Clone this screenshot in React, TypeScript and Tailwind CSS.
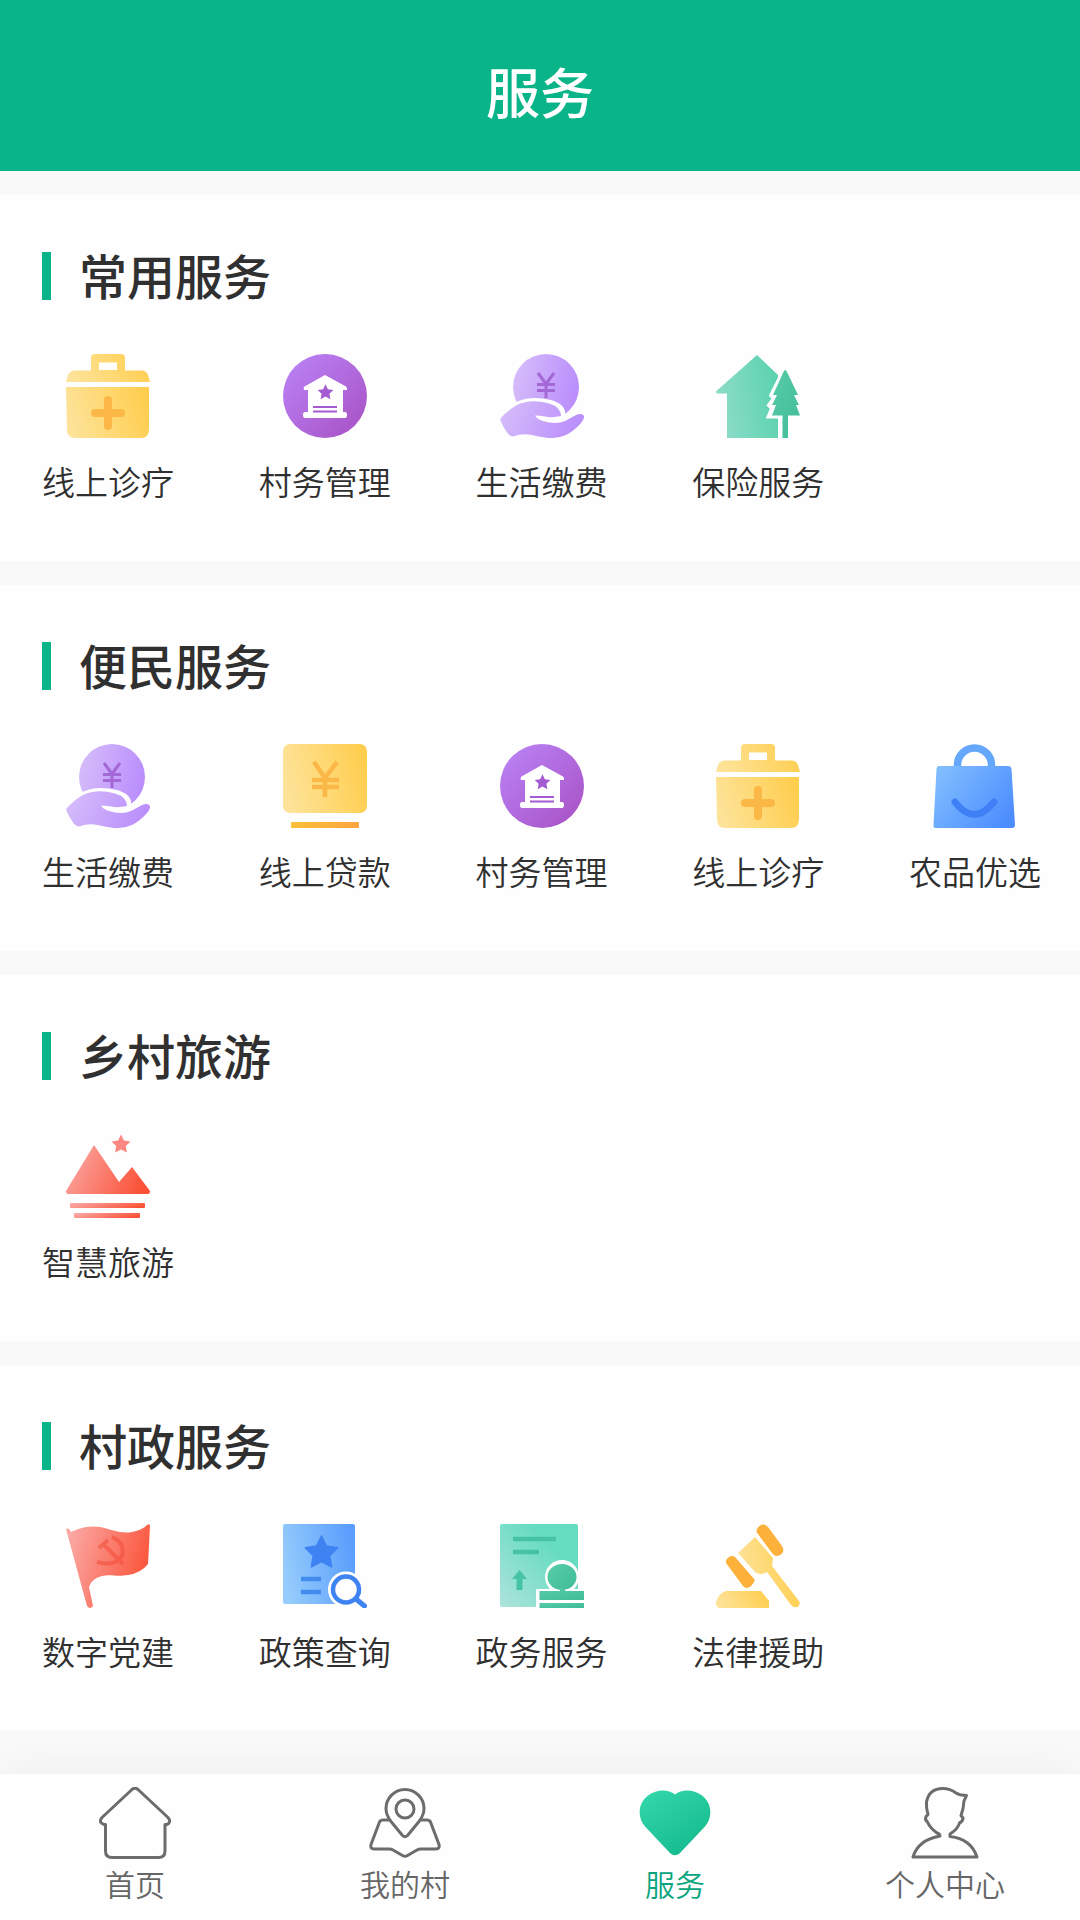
import type { ReactNode } from "react";

const STAR =
  "M0 -10 L2.9 -4 L9.5 -3.1 L4.8 1.5 L5.9 8.1 L0 5 L-5.9 8.1 L-4.8 1.5 L-9.5 -3.1 L-2.9 -4 Z";

function Gradients() {
  return (
    <svg className="absolute size-0" aria-hidden="true">
      <defs>
        <linearGradient id="yellow" x1="0" y1="0.6" x2="1" y2="0.4">
          <stop offset="0" stopColor="#fde39a" />
          <stop offset="1" stopColor="#ffce4f" />
        </linearGradient>
        <linearGradient id="orange" x1="0" y1="0" x2="1" y2="0">
          <stop offset="0" stopColor="#fcbf3a" />
          <stop offset="1" stopColor="#fda53f" />
        </linearGradient>
        <linearGradient id="violet" x1="0.1" y1="0.1" x2="0.9" y2="0.9">
          <stop offset="0" stopColor="#b980f3" />
          <stop offset="1" stopColor="#a955c8" />
        </linearGradient>
        <linearGradient id="lilac" x1="0" y1="0.4" x2="1" y2="0.6">
          <stop offset="0" stopColor="#d5bcfa" />
          <stop offset="1" stopColor="#b98cfc" />
        </linearGradient>
        <linearGradient id="mint" x1="0" y1="0.6" x2="1" y2="0.4">
          <stop offset="0" stopColor="#8edcc8" />
          <stop offset="1" stopColor="#5cd3b0" />
        </linearGradient>
        <linearGradient id="paper" x1="0" y1="1" x2="0.7" y2="0.3">
          <stop offset="0" stopColor="#aee3dc" />
          <stop offset="1" stopColor="#66dcc0" />
        </linearGradient>
        <linearGradient id="green" x1="0" y1="0" x2="1" y2="1">
          <stop offset="0" stopColor="#58cba9" />
          <stop offset="1" stopColor="#3fbd97" />
        </linearGradient>
        <linearGradient id="blue" x1="0" y1="0.2" x2="1" y2="0.8">
          <stop offset="0" stopColor="#80bdff" />
          <stop offset="1" stopColor="#4b8cff" />
        </linearGradient>
        <linearGradient id="sheet" x1="0" y1="0.6" x2="1" y2="0.4">
          <stop offset="0" stopColor="#96cdfc" />
          <stop offset="1" stopColor="#5a9dfc" />
        </linearGradient>
        <linearGradient id="red" x1="0" y1="0.3" x2="1" y2="0.6">
          <stop offset="0" stopColor="#fba7a3" />
          <stop offset="1" stopColor="#fb5136" />
        </linearGradient>
        <linearGradient id="heart" x1="0.1" y1="0" x2="0.8" y2="1">
          <stop offset="0" stopColor="#33d6ab" />
          <stop offset="1" stopColor="#13b98c" />
        </linearGradient>
      </defs>
    </svg>
  );
}

function Art({ children }: { children: ReactNode }) {
  return (
    <svg viewBox="0 0 84 84" className="size-21" fill="none" aria-hidden="true">
      {children}
    </svg>
  );
}

const MedicalKit = () => (
  <Art>
    <path
      fill="url(#yellow)"
      fillRule="evenodd"
      d="M29 0 H55 Q59 0 59 4 V16.500 H76 Q80 16.500 82 21 L84 28 H0 L2 21 Q4 16.500 9 16.500 H25 V4 Q25 0 29 0 Z M33 8.500 V16 H51 V8.500 Z"
    />
    <path fill="url(#yellow)" d="M0 33 H83 V75 Q83 84 75 84 H9 Q1 84 1 75 Z" />
    <path d="M42 46 V72 M29 59 H55" stroke="#fbb847" strokeWidth="8" strokeLinecap="round" />
  </Art>
);

const VillageHall = () => (
  <Art>
    <circle cx="42" cy="42" r="42" fill="url(#violet)" />
    <path
      fill="#fff"
      d="M42 21 L63 32.500 Q64.500 33.500 64 36 H60 V58 H62 Q64 58 64 61 Q64 64 62 64 H22 Q20 64 20 61 Q20 58 22 58 H25 V36 H21 Q20 33.500 21.500 32.500 Z"
    />
    <path d={STAR} transform="translate(42.5 38.500) scale(0.82)" fill="#a45ad0" />
    <path d="M30 53 H54 M30 57.500 H54" stroke="#a45ad0" strokeWidth="2" />
  </Art>
);

const HandCoin = () => (
  <Art>
    <circle cx="46" cy="33" r="33" fill="url(#lilac)" />
    <path
      d="M38 19 L46 30 L54 19 M46 30 V44 M37 30.500 H55 M37 36.500 H55"
      stroke="#a468d6"
      strokeWidth="3"
    />
    <path
      d="M0 66 Q8 55 17 51 Q31 44 50 49 Q64 53 62 62 L64 66 Q70 65 77 60 Q81 58 84 61 L84 86 H0 Z"
      fill="#fefefe"
      stroke="#fefefe"
      strokeWidth="6"
    />
    <path
      d="M0 65 Q8 56 17 51 Q31 44.500 49 49.500 Q61 53 61 62 Q52 64 45 62.500 Q40 61.500 35 61.500 Q37 65 43 67 Q56 71 65 67 L76 61 Q82 58.500 84 62 Q84.500 65 81 69 Q74 77 66 81 Q58 84.500 48 84 Q40 83 32 81 Q22 79 13 82.500 Q9 82 6 77 Q1 69 0 65 Z"
      fill="url(#lilac)"
    />
  </Art>
);

const OnlineLoan = () => (
  <Art>
    <rect width="84" height="69" rx="7" fill="url(#yellow)" />
    <path
      d="M31 18 L42 34 L54 18 M42 34 V53 M29 36 H56 M29 43 H56"
      stroke="#fbb747"
      strokeWidth="4.500"
    />
    <rect x="8" y="78" width="68" height="6" rx="1" fill="url(#orange)" />
  </Art>
);

const HouseTree = () => (
  <Art>
    <path fill="url(#mint)" d="M41 1 L62 21 V84 H11 V39.500 H1 Q-1 38 1 36.500 Z" />
    <path
      fill="#fefefe"
      stroke="#fefefe"
      strokeWidth="7"
      d="M69 17 L57 41 L60 44 L55 51 L58 54 L55 61 H66 V84 H78 V30 Z"
    />
    <path
      fill="url(#green)"
      d="M69 16 Q70 16 71 18 L82 41 H78 L83 51 H80 L84 61.500 H72 V84 H66.500 V61.500 H56 L60 51 H56 L61 41 H57 L67 19 Q68 16 69 16 Z"
    />
  </Art>
);

const ShoppingBag = () => (
  <Art>
    <path d="M24.500 26 V21 A17 17 0 0 1 58.500 21 V26" stroke="#65a8fb" strokeWidth="7.500" />
    <path
      d="M6 22 H75 Q78 22 78.500 25 L82 81 Q82 84 79 84 H3 Q0 84 .5 81 L3.500 25 Q4 22 6 22 Z"
      fill="url(#blue)"
    />
    <path d="M22 58 Q41 83 61 58" stroke="#3f80f6" strokeWidth="7" strokeLinecap="round" />
  </Art>
);

const Mountains = () => (
  <Art>
    <path d={STAR} transform="translate(55 10.500)" fill="#fb8780" />
    <path fill="url(#red)" d="M28 11 L53 48 L66 33 L84 57 Q84 60 82 60 H2 Q0 60 0 57 Z" />
    <rect x="4" y="69" width="75" height="5" rx="1" fill="url(#red)" />
    <rect x="8" y="79" width="66" height="5" rx="1" fill="url(#red)" />
  </Art>
);

const PartyFlag = () => (
  <Art>
    <path
      fill="url(#red)"
      d="M0 5 Q3 3 5 8 Q20 1 34 3 C48 6 56 11 70 7 Q77 5 81 1 Q84 -1 84 2 L82 40 Q75 49 62 51 C50 53 46 50 36 52 Q25 55 23 63 L27 82 Q24 86 21 82 Z"
    />
    <path
      d="M46 13 Q59 18 56 32 Q50 43 31 38 M33 24 L42 16 M37 20 L57 40"
      stroke="#f4503c"
      strokeWidth="4"
      opacity="0.6"
    />
  </Art>
);

const PolicySearch = () => (
  <Art>
    <rect width="72" height="80" rx="2" fill="url(#sheet)" />
    <path
      d={STAR}
      transform="translate(38.500 29) scale(1.7)"
      fill="#3f83f3"
      stroke="#3f83f3"
      strokeLinejoin="round"
    />
    <path d="M18 55 H38 M18 68 H38" stroke="#438cee" strokeWidth="4.500" />
    <circle cx="63" cy="65.500" r="18" fill="#fefefe" />
    <path d="M73 76 L81 82" stroke="#fefefe" strokeWidth="9" />
    <circle cx="63" cy="65.500" r="13" stroke="#3f83f3" strokeWidth="4.500" fill="#fefefe" />
    <path d="M73 75 L81.500 82" stroke="#3f83f3" strokeWidth="5" strokeLinecap="round" />
  </Art>
);

const GovernmentStamp = () => (
  <Art>
    <rect width="78" height="83" rx="2" fill="url(#paper)" />
    <path d="M13 15 H56 M13 28 H39" stroke="#46c3a3" strokeWidth="4.500" />
    <path d="M19.500 46 L27 55 H22.500 V66 H16.500 V55 H12 Z" fill="#46c3a3" />
    <circle cx="62" cy="53" r="17" fill="#fefefe" />
    <path d="M36 65 H84 V84 H36 Z" fill="#fefefe" />
    <ellipse cx="62" cy="53" rx="14.500" ry="13" fill="url(#green)" />
    <path d="M60 64 H65 V67 H84 V76 H39.500 V67 H60 Z" fill="url(#green)" />
    <path d="M39.500 79 H84 V84 H39.500 Z" fill="url(#green)" />
  </Art>
);

const Gavel = () => (
  <Art>
    <path
      d="M39 13 L57 34 L56 42 L83 77 Q85 81 81 83 Q78 84 75 81 L51 48 Q45 52 39 48 L22 29 Z"
      fill="url(#yellow)"
    />
    <path
      d="M40.500 8 Q40 5 44 1.500 Q48 -1 52 3 L66 22 Q68 25 67 28 Q65 32 60 32 Q58 32 56 29 Z"
      fill="#fdb13a"
    />
    <path
      d="M10 39 Q9 36 13 33 Q17 31 19 33 L39 56 Q36 63 31 64 Q29 64 27 62 Z"
      fill="#fdb13a"
    />
    <path d="M10 67 H45 L53 77 V84 H3 Q-1 82 0 78 Q3 69 10 67 Z" fill="url(#yellow)" />
  </Art>
);

function TabArt({ children }: { children: ReactNode }) {
  return (
    <svg
      viewBox="0 0 72 72"
      className="size-18"
      fill="none"
      stroke="#6c6c6c"
      strokeWidth="3"
      strokeLinejoin="round"
      aria-hidden="true"
    >
      {children}
    </svg>
  );
}

const HomeIcon = () => (
  <TabArt>
    <path d="M33 2.500 Q36 0 39 2.500 L69 30.500 Q73 35.500 67.500 37.500 H66 V64 Q66 70.500 59.500 70.500 H13 Q6.500 70.500 6.500 64 V37.500 H5 Q-1 35.500 3 30.500 Z" />
  </TabArt>
);

const MapIcon = () => (
  <TabArt>
    <path d="M33.500 48.500 Q36 51 38.500 48.500 L50 34.500 Q55 28 55 21.500 A19 19 0 0 0 17 21.500 Q17 28 22 34.500 Z" />
    <circle cx="36" cy="22" r="9" />
    <path d="M21 33 H14 Q11.500 33 10.500 35 L2 57.500 Q1 62 5 62 H20 Q22.500 62 24 63 L33.500 68.500 Q36 70 38.500 68.500 L48 63 Q49.500 62 52 62 H67 Q71 62 70 57.500 L61.500 35 Q60.500 33 58 33 H51" />
  </TabArt>
);

const HeartIcon = () => (
  <TabArt>
    <path
      fill="url(#heart)"
      stroke="none"
      d="M36 7.500 C43 2 54 2 63 8.500 C73 16 74 30 66 39.500 L41 66 Q36 70.500 31 66 L6 39.500 C-2 30 -1 16 9 8.500 C18 2 29 2 36 7.500 Z"
    />
  </TabArt>
);

const PersonIcon = () => (
  <TabArt>
    <path d="M31 49 Q31 47 28 46 Q21 41 18.500 35 Q15.500 33 17 29.500 L19 27.500 Q17 21 17.500 15 Q20 1.500 34 1.500 Q41 1.500 47 6 Q51 8.500 57.500 8.500 L55 14 Q54.500 22 52 28.500 L54 31 Q54 34.500 50.500 36 Q49 42 41 47 V49.500 Q62 52 68 70 H4 Q9 53 31 49 Z" />
  </TabArt>
);

type Service = { label: string; Icon: () => ReactNode };

const clinic: Service = { label: "线上诊疗", Icon: MedicalKit };
const village: Service = { label: "村务管理", Icon: VillageHall };
const bills: Service = { label: "生活缴费", Icon: HandCoin };

const sections: { title: string; items: Service[] }[] = [
  { title: "常用服务", items: [clinic, village, bills, { label: "保险服务", Icon: HouseTree }] },
  {
    title: "便民服务",
    items: [
      bills,
      { label: "线上贷款", Icon: OnlineLoan },
      village,
      clinic,
      { label: "农品优选", Icon: ShoppingBag },
    ],
  },
  { title: "乡村旅游", items: [{ label: "智慧旅游", Icon: Mountains }] },
  {
    title: "村政服务",
    items: [
      { label: "数字党建", Icon: PartyFlag },
      { label: "政策查询", Icon: PolicySearch },
      { label: "政务服务", Icon: GovernmentStamp },
      { label: "法律援助", Icon: Gavel },
    ],
  },
];

const tabs = [
  { label: "首页", Icon: HomeIcon, active: false },
  { label: "我的村", Icon: MapIcon, active: false },
  { label: "服务", Icon: HeartIcon, active: true },
  { label: "个人中心", Icon: PersonIcon, active: false },
];

export default function App() {
  return (
    <div className="flex min-h-screen flex-col bg-[#f9f9f9] font-['Noto_Sans_CJK_SC',sans-serif] text-[#303030]">
      <Gradients />
      <header className="bg-[#09b489] pt-[58px] pb-[47px] text-center">
        <h1 className="text-[54px] leading-[66px] font-medium text-white">服务</h1>
      </header>

      <main className="flex flex-col gap-6 pt-6">
        {sections.map(({ title, items }) => (
          <section key={title} className="bg-[#fefefe] pt-[57px] pr-[39px] pb-[60px] pl-[42px]">
            <h2 className="flex items-start gap-7 text-[48px] leading-[44px] font-medium">
              <span className="h-12 w-[9px] bg-[#09b489]" />
              {title}
            </h2>
            <div className="mt-[54px] grid grid-cols-[repeat(5,132px)] justify-between">
              {items.map(({ label, Icon }) => (
                <button key={label} type="button" className="flex flex-col items-center gap-[23px]">
                  <Icon />
                  <span className="text-[33px] leading-10 font-[350] whitespace-nowrap">{label}</span>
                </button>
              ))}
            </div>
          </section>
        ))}
      </main>

      <nav className="sticky bottom-0 mt-auto grid grid-cols-4 bg-[#fefefe] pt-[13px] pb-[19px] shadow-[0_0_40px_rgba(0,0,0,0.05)]">
        {tabs.map(({ label, Icon, active }) => (
          <button
            key={label}
            type="button"
            aria-current={active ? "page" : undefined}
            className={
              active
                ? "flex flex-col items-center gap-1.5 text-[#09a57d]"
                : "flex flex-col items-center gap-1.5 text-[#666666]"
            }
          >
            <Icon />
            <span className="text-[30px] leading-9 font-[350]">{label}</span>
          </button>
        ))}
      </nav>
    </div>
  );
}
